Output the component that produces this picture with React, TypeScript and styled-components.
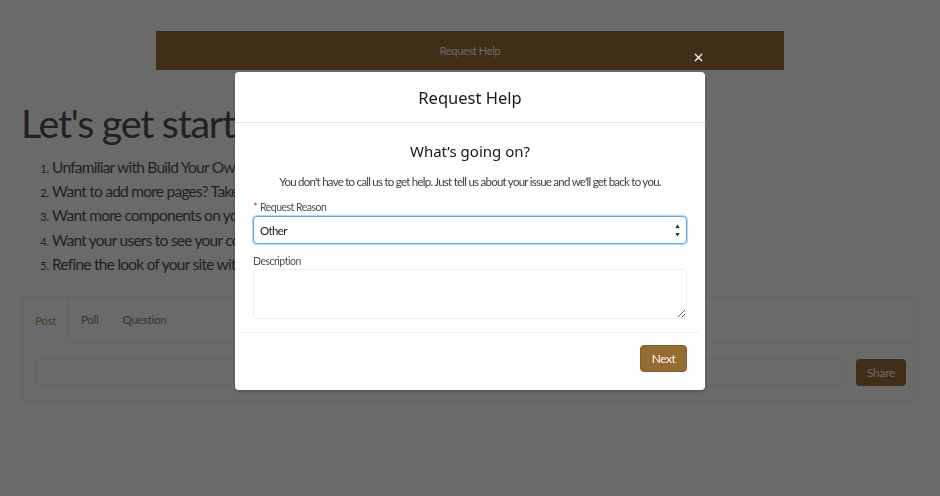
import React, { ReactElement } from "react";
import styled, { createGlobalStyle } from "styled-components";
import { X } from "lucide-react";

const GlobalStyle = createGlobalStyle`
  html, body {
    margin: 0;
    padding: 0;
    background: #ffffff;
    font-family: Lato, "Liberation Sans", sans-serif;
    overflow: hidden;
  }
  * {
    box-sizing: border-box;
  }
`;

const brown = "#946a30";

const Page = styled.div`
  width: 940px;
  height: 496px;
  padding: 31px 22px 0 22px;
`;

const Banner = styled.div`
  width: 628px;
  height: 39px;
  margin: 0 auto;
  background: ${brown};
  color: #ffffff;
  font-size: 11px;
  letter-spacing: -0.35px;
  display: flex;
  align-items: center;
  justify-content: center;
`;

const Heading = styled.h1`
  margin: 28px 0 0 -1px;
  font-size: 39.5px;
  line-height: 50px;
  font-weight: 400;
  letter-spacing: -1.3px;
  color: #4a4747;
`;

const Steps = styled.ol`
  margin: 7px 0 0 0;
  padding-left: 30px;
  color: #4a4747;
  font-size: 15.5px;
  line-height: 24.2px;
  letter-spacing: -0.75px;

  li::marker {
    font-size: 11px;
    letter-spacing: 0;
  }
`;

const Publisher = styled.div`
  margin-top: 20px;
  border: 1px solid #f0f0f0;
  border-radius: 4px;
`;

const TabRow = styled.div`
  display: flex;
  height: 46px;
`;

const Tab = styled.div<{ $active?: boolean }>`
  display: flex;
  align-items: center;
  padding: 0 12px;
  font-size: 11.5px;
  letter-spacing: -0.3px;
  color: ${(p) => (p.$active ? "#b48d5e" : "#7e7c7a")};
  border-right: ${(p) => (p.$active ? "1px solid #f0f0f0" : "none")};
  border-bottom: ${(p) => (p.$active ? "none" : "1px solid #f0f0f0")};
`;

const TabFill = styled.div`
  flex: 1;
  border-bottom: 1px solid #f0f0f0;
`;

const PublisherBody = styled.div`
  display: flex;
  gap: 10px;
  padding: 16px 11px 14px 12px;
`;

const PublisherInput = styled.div`
  flex: 1;
  height: 27px;
  border: 1px solid #f0f0f0;
  border-radius: 4px;
`;

const ShareButton = styled.div`
  width: 50px;
  height: 27px;
  border-radius: 4px;
  background: ${brown};
  color: #ffffff;
  font-size: 12px;
  letter-spacing: -0.3px;
  display: flex;
  align-items: center;
  justify-content: center;
`;

const Backdrop = styled.div`
  position: fixed;
  inset: 0;
  background: rgba(8, 6, 7, 0.6);
  display: flex;
  justify-content: center;
  align-items: flex-start;
  padding-top: 72px;
`;

const Modal = styled.div`
  position: relative;
  width: 470px;
  background: #ffffff;
  border-radius: 4px;
  box-shadow: 0 2px 3px rgba(0, 0, 0, 0.16);
`;

const CloseButton = styled.button`
  position: absolute;
  top: -21px;
  right: 0;
  width: 13px;
  height: 13px;
  padding: 0;
  border: none;
  background: transparent;
  color: #ffffff;
  display: flex;
  align-items: center;
  justify-content: center;
`;

const ModalHeader = styled.div`
  height: 51px;
  border-bottom: 1px solid #e5e5e5;
  display: flex;
  align-items: center;
  justify-content: center;
  font-family: "Noto Sans", "Open Sans", sans-serif;
  font-size: 16.5px;
  color: #181818;
`;

const ModalBody = styled.div`
  padding: 16px 18px 13px 18px;
`;

const Question = styled.h2`
  margin: 0;
  text-align: center;
  font-family: "Noto Sans", "Open Sans", sans-serif;
  font-size: 15px;
  line-height: 24px;
  font-weight: 400;
  color: #181818;
`;

const Intro = styled.p`
  margin: 10px 0 0 0;
  text-align: center;
  font-size: 11.5px;
  line-height: 18px;
  letter-spacing: -0.75px;
  white-space: nowrap;
  color: #3e3e3c;
`;

const Label = styled.div<{ $gap: number }>`
  display: flex;
  align-items: center;
  gap: 3px;
  margin-top: ${(p) => p.$gap}px;
  font-size: 10.5px;
  line-height: 16px;
  letter-spacing: -0.5px;
  color: #514f4d;
`;

const Required = styled.span`
  color: #c23934;
`;

const Combo = styled.div`
  margin-top: 1px;
  height: 28px;
  border: 1px solid #5ea8e6;
  box-shadow: 0 0 0 1px #b5d8f5;
  border-radius: 4px;
  padding: 0 6px;
  background: #ffffff;
  display: flex;
  align-items: center;
  justify-content: space-between;
  font-size: 11.5px;
  letter-spacing: -0.65px;
  color: #181818;
`;

const TextArea = styled.textarea`
  display: block;
  width: 100%;
  height: 50px;
  border: 1px solid #efefef;
  border-radius: 4px;
  resize: vertical;
  font-family: Lato, "Liberation Sans", sans-serif;
  font-size: 12px;
  outline: none;
`;

const ModalFooter = styled.div`
  margin: 0 6px;
  border-top: 1px solid #efefef;
  padding: 12px 12px 18px 12px;
  display: flex;
  justify-content: flex-end;
`;

const NextButton = styled.button`
  height: 27px;
  width: 47px;
  padding: 0;
  border: 1px solid #86602a;
  border-radius: 4px;
  background: #966b2f;
  color: #ffffff;
  font-family: Lato, "Liberation Sans", sans-serif;
  font-size: 12px;
  letter-spacing: -0.5px;
`;

const Spinner = () => (
  <svg width="5" height="13" viewBox="0 0 5 13">
    <path d="M2.5 0.5 L4.6 4 L0.4 4 Z" fill="#2b2826" />
    <path d="M2.5 12.5 L4.6 9 L0.4 9 Z" fill="#2b2826" />
  </svg>
);

// the rest of each step sits behind the dialog
const steps = [
  "Unfamiliar with Build Your Own",
  "Want to add more pages? Take",
  "Want more components on your",
  "Want your users to see your copy",
  "Refine the look of your site with",
];

export default function App(): ReactElement {
  return (
    <>
      <GlobalStyle />
      <Page>
        <Banner>Request Help</Banner>
        <Heading>Let's get started!</Heading>
        <Steps>
          {steps.map((s) => (
            <li key={s}>{s}</li>
          ))}
        </Steps>
        <Publisher>
          <TabRow>
            <Tab $active>Post</Tab>
            <Tab>Poll</Tab>
            <Tab>Question</Tab>
            <TabFill />
          </TabRow>
          <PublisherBody>
            <PublisherInput />
            <ShareButton>Share</ShareButton>
          </PublisherBody>
        </Publisher>
      </Page>
      <Backdrop>
        <Modal>
          <CloseButton aria-label="Close">
            <X size={13} strokeWidth={2.2} />
          </CloseButton>
          <ModalHeader>Request Help</ModalHeader>
          <ModalBody>
            <Question>What’s going on?</Question>
            <Intro>
              You don't have to call us to get help. Just tell us about your
              issue and we'll get back to you.
            </Intro>
            <Label $gap={8}>
              <Required>*</Required>
              <span>Request Reason</span>
            </Label>
            <Combo role="combobox">
              <span>Other</span>
              <Spinner />
            </Combo>
            <Label $gap={9}>Description</Label>
            <TextArea aria-label="Description" />
          </ModalBody>
          <ModalFooter>
            <NextButton>Next</NextButton>
          </ModalFooter>
        </Modal>
      </Backdrop>
    </>
  );
}
